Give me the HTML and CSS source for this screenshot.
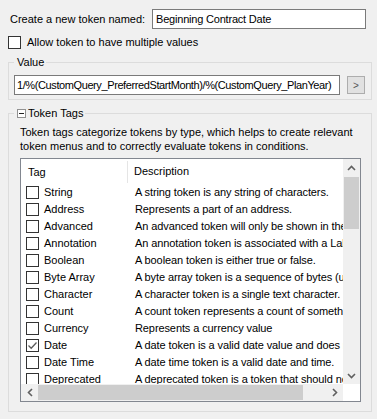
FILE: index.html
```html
<!DOCTYPE html>
<html lang="en">

<head>
    <meta charset="UTF-8">
    <meta name="viewport" content="width=device-width, initial-scale=1.0">
    <title>Token</title>
    <link rel="stylesheet" href="styles.css">
</head>

<body>
    <div class="form">
        <div class="name-row">
            <span class="name-label">Create a new token named:</span>
            <div class="textbox name-box">Beginning Contract Date</div>
        </div>
        <div class="check-row">
            <span class="checkbox"></span>
            <span>Allow token to have multiple values</span>
        </div>

        <fieldset class="group value-group">
            <legend>Value</legend>
            <div class="value-row">
                <div class="textbox value-box">1/%(CustomQuery_PreferredStartMonth)/%(CustomQuery_PlanYear)</div>
                <div class="small-btn">&gt;</div>
            </div>
        </fieldset>

        <fieldset class="group tags-group">
            <legend><span class="expander"></span>Token Tags</legend>
            <div class="tags-body">
                <p class="tags-info">Token tags categorize tokens by type, which helps to create relevant<br>token menus and to correctly evaluate tokens in conditions.</p>
                <div class="list">
                    <div class="list-view">
                        <div class="list-head">
                            <div class="col-tag">Tag</div>
                            <div class="col-desc">Description</div>
                        </div>
                        <div class="list-row"><div class="col-tag"><span class="checkbox"></span>String</div><div class="col-desc">A string token is any string of characters.</div></div>
                        <div class="list-row"><div class="col-tag"><span class="checkbox"></span>Address</div><div class="col-desc">Represents a part of an address.</div></div>
                        <div class="list-row"><div class="col-tag"><span class="checkbox"></span>Advanced</div><div class="col-desc">An advanced token will only be shown in the advanced menu.</div></div>
                        <div class="list-row"><div class="col-tag"><span class="checkbox"></span>Annotation</div><div class="col-desc">An annotation token is associated with a Label.</div></div>
                        <div class="list-row"><div class="col-tag"><span class="checkbox"></span>Boolean</div><div class="col-desc">A boolean token is either true or false.</div></div>
                        <div class="list-row"><div class="col-tag"><span class="checkbox"></span>Byte Array</div><div class="col-desc">A byte array token is a sequence of bytes (usually binary data).</div></div>
                        <div class="list-row"><div class="col-tag"><span class="checkbox"></span>Character</div><div class="col-desc">A character token is a single text character.</div></div>
                        <div class="list-row"><div class="col-tag"><span class="checkbox"></span>Count</div><div class="col-desc">A count token represents a count of something.</div></div>
                        <div class="list-row"><div class="col-tag"><span class="checkbox"></span>Currency</div><div class="col-desc">Represents a currency value</div></div>
                        <div class="list-row"><div class="col-tag"><span class="checkbox checked"><svg width="11" height="11" viewBox="0 0 11 11"><path d="M1.5 5.5 L4.2 8.2 L9.5 2.5" fill="none" stroke="#5c5c5c" stroke-width="1.3"/></svg></span>Date</div><div class="col-desc">A date token is a valid date value and does not include a time.</div></div>
                        <div class="list-row"><div class="col-tag"><span class="checkbox"></span>Date Time</div><div class="col-desc">A date time token is a valid date and time.</div></div>
                        <div class="list-row"><div class="col-tag"><span class="checkbox"></span>Deprecated</div><div class="col-desc">A deprecated token is a token that should not be used.</div></div>
                    </div>
                    <div class="vscroll">
                        <div class="arrow"><svg width="9" height="6" viewBox="0 0 9 6"><path d="M1 5 L4.5 1.5 L8 5" fill="none" stroke="#606060" stroke-width="1.6"/></svg></div>
                        <div class="thumb"></div>
                        <div class="track"></div>
                        <div class="arrow"><svg width="9" height="6" viewBox="0 0 9 6"><path d="M1 1 L4.5 4.5 L8 1" fill="none" stroke="#606060" stroke-width="1.6"/></svg></div>
                    </div>
                    <div class="hscroll">
                        <div class="arrow"><svg width="6" height="9" viewBox="0 0 6 9"><path d="M5 1 L1.5 4.5 L5 8" fill="none" stroke="#606060" stroke-width="1.6"/></svg></div>
                        <div class="thumb"></div>
                        <div class="track"></div>
                        <div class="arrow"><svg width="6" height="9" viewBox="0 0 6 9"><path d="M1 1 L4.5 4.5 L1 8" fill="none" stroke="#606060" stroke-width="1.6"/></svg></div>
                    </div>
                    <div class="corner"></div>
                </div>
            </div>
        </fieldset>
    </div>
</body>

</html>
```

FILE: styles.css
```css
* {
    box-sizing: border-box;
}

body {
    margin: 0;
    width: 377px;
    height: 419px;
    overflow: hidden;
    background: #f0f0f0;
    color: #000;
    font: 11px/13px "Liberation Sans", Arial, sans-serif;
}

.form {
    padding: 9px 6px 0 8px;
}

.name-row {
    display: flex;
    align-items: center;
    padding-left: 2px;
}

.name-label {
    width: 142px;
}

.textbox {
    height: 20px;
    display: flex;
    align-items: center;
    padding-left: 3px;
    background: #fff;
    border: 1px solid #7a7a7a;
    white-space: nowrap;
    overflow: hidden;
}

.name-box {
    width: 214px;
    letter-spacing: -0.2px;
}

.check-row {
    display: flex;
    align-items: center;
    gap: 6px;
    margin-top: 7px;
}

.checkbox {
    width: 13px;
    height: 13px;
    flex: none;
    display: flex;
    align-items: center;
    justify-content: center;
    background: #fff;
    border: 1px solid #333;
}

/* group boxes */
.group {
    margin: 0;
    width: 364px;
    border: 1px solid #dcdcdc;
}

.group legend {
    padding: 0 2px 0 3px;
}

.value-group {
    margin-top: 7px;
    padding: 0 5px 4px 5px;
}

.value-row {
    display: flex;
    align-items: center;
    margin-top: 6px;
}

.value-box {
    width: 326px;
    padding-left: 2px;
    letter-spacing: -0.4px;
}

.small-btn {
    width: 18px;
    height: 18px;
    margin-left: 7px;
    display: flex;
    align-items: center;
    justify-content: center;
    color: #555;
    font-size: 10px;
    background: #e1e1e1;
    border: 1px solid #adadad;
}

.tags-group {
    margin-top: 7px;
    padding: 0 10px 9px 5px;
}

.tags-group legend {
    display: flex;
    align-items: center;
    gap: 2px;
}

.expander {
    width: 9px;
    height: 9px;
    background: #fff;
    border: 1px solid #919191;
    position: relative;
}

.expander::after {
    content: "";
    position: absolute;
    left: 1px;
    right: 1px;
    top: 3px;
    height: 1px;
    background: #222;
}

.tags-body {
    padding-left: 6px;
}

.tags-info {
    margin: 5px 0 5px;
    line-height: 14px;
}

/* list view */
.list {
    width: 341px;
    height: 244px;
    display: grid;
    grid-template-columns: 1fr 17px;
    grid-template-rows: 1fr 17px;
    background: #fff;
    border: 1px solid #828790;
}

.list-view {
    overflow: hidden;
    white-space: nowrap;
}

.list-head,
.list-row {
    display: flex;
}

.list-head {
    height: 25px;
    align-items: center;
}

.list-head .col-tag {
    padding-left: 7px;
    border-right: 1px solid #e5e5e5;
    height: 22px;
    line-height: 22px;
}

.list-head .col-desc {
    padding-left: 6px;
}

.col-tag {
    width: 107px;
    flex: none;
}

.list-row {
    height: 17px;
    align-items: center;
}

.list-row .col-tag {
    display: flex;
    align-items: center;
    gap: 5px;
    padding-left: 5px;
}

.list-row .col-desc {
    padding-left: 7px;
    letter-spacing: -0.1px;
}

.vscroll,
.hscroll {
    display: flex;
    background: #f0f0f0;
}

.vscroll {
    flex-direction: column;
}

.arrow {
    width: 17px;
    height: 17px;
    flex: none;
    display: flex;
    align-items: center;
    justify-content: center;
}

.thumb {
    background: #cdcdcd;
    flex: none;
}

.vscroll .thumb {
    height: 52px;
    margin: 1px 1px 0;
}

.hscroll .thumb {
    width: 265px;
    margin: 1px 0;
}

.track {
    flex: 1;
}

.corner {
    background: #fff;
}
```
